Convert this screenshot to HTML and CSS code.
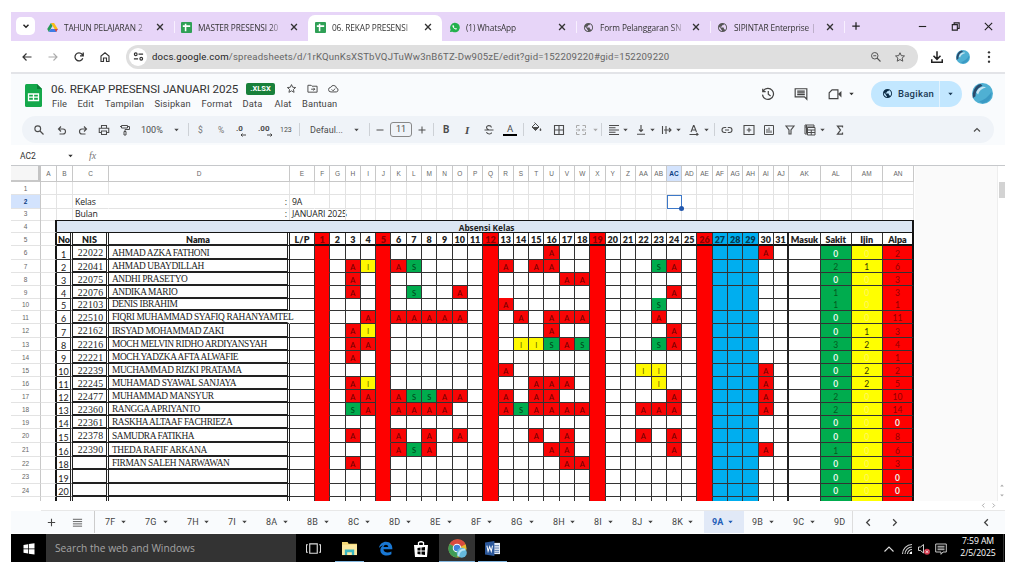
FILE: index.html
```html
<!DOCTYPE html>
<html lang="id">
<head>
<meta charset="utf-8">
<title>06. REKAP PRESENSI JANUARI 2025</title>
<link rel="stylesheet" href="styles.css">
</head>
<body>
<svg class="defs" xmlns="http://www.w3.org/2000/svg">
  <symbol id="x" viewBox="0 0 12 12"><path d="M2.500 2.500l7 7M9.500 2.500l-7 7" fill="none" stroke="currentColor" stroke-width="1.600"/></symbol>
  <symbol id="globe" viewBox="0 0 24 24"><path d="M12 2a10 10 0 1 0 0 20 10 10 0 0 0 0-20zm-1 17.900A8 8 0 0 1 4.200 10.200L9 15v1c0 1.100.9 2 2 2v1.900zm6.900-2.500A2 2 0 0 0 16 16h-1v-3a1 1 0 0 0-1-1H8v-2h2a1 1 0 0 0 1-1V7h2a2 2 0 0 0 2-2v-.4a8 8 0 0 1 2.900 12.800z" fill="currentColor"/></symbol>
  <symbol id="sheet" viewBox="0 0 12 12"><rect width="12" height="12" rx="1" fill="#2fa056"/><path d="M2 4.500h8M5 2v8" stroke="#fff" stroke-width="1.700"/></symbol>
  <symbol id="star" viewBox="0 0 24 24"><path d="M12 3.500l2.600 5.800 6.400.6-4.800 4.200 1.400 6.300-5.600-3.300-5.600 3.300 1.400-6.300L3 9.900l6.400-.6z" fill="none" stroke="currentColor" stroke-width="2"/></symbol>
  <symbol id="search" viewBox="0 0 24 24"><circle cx="9.500" cy="9.500" r="5.800" fill="none" stroke="currentColor" stroke-width="2.200"/><path d="M14 14l7 7" stroke="currentColor" stroke-width="2.600"/></symbol>
  <symbol id="zoomout" viewBox="0 0 24 24"><circle cx="9.500" cy="9.500" r="6.500" fill="none" stroke="currentColor" stroke-width="2"/><path d="M14 14l7 7M6.500 9.500h6" stroke="currentColor" stroke-width="2.200"/></symbol>
  <symbol id="caret" viewBox="0 0 6 4"><path d="M.3.500h5.400L3 3.500z" fill="currentColor"/></symbol>
  <symbol id="left" viewBox="0 0 12 12"><path d="M7.500 2.500L4 6l3.500 3.500" fill="none" stroke="currentColor" stroke-width="1.400"/></symbol>
  <symbol id="right" viewBox="0 0 12 12"><path d="M4.500 2.500L8 6 4.500 9.500" fill="none" stroke="currentColor" stroke-width="1.400"/></symbol>
  <symbol id="undo" viewBox="0 0 24 24"><path d="M7 20h7a5 5 0 0 0 0-10H5m5-5L5 10l5 5" fill="none" stroke="currentColor" stroke-width="2.300"/></symbol>
  <symbol id="avatar" viewBox="0 0 24 24"><circle cx="12" cy="12" r="12" fill="#4fb0d3"/><path d="M1 17C0 9 4 2 10 1l2 2c-5 2-8 6-8 12z" fill="#2a4a6b"/><path d="M5 11c1-5 7-8 11-6-5 1-8 4-9 8z" fill="#c9e6f2"/><path d="M8 21c5-1 11-5 14-11 2 7-4 13-10 13z" fill="#3b9ac4"/></symbol>
</svg>

<main class="desktop">
  <div class="tabstrip">
    <div class="tabsearch"><svg viewBox="0 0 12 12"><path d="M3 4.500l3 3 3-3" fill="none" stroke="#222" stroke-width="1.700"/></svg></div>
    <div class="tab"><svg class="fav" viewBox="0 0 24 24"><path d="M8.500 2h7l8 13h-7z" fill="#f8bc16"/><path d="M8.500 2L.5 15.500 4 22l8-13.500z" fill="#249a57"/><path d="M4 22l3.800-7h15.700L20 22z" fill="#3e7de6"/><path d="M20 22l3.500-7h-7z" fill="#e4483b"/></svg><span class="t">TAHUN PELAJARAN 2</span><svg class="close"><use href="#x"/></svg></div>
    <div class="tab split"><svg class="fav"><use href="#sheet"/></svg><span class="t">MASTER PRESENSI 20</span><svg class="close"><use href="#x"/></svg></div>
    <div class="tab active"><svg class="fav"><use href="#sheet"/></svg><span class="t">06. REKAP PRESENSI</span><svg class="close"><use href="#x"/></svg></div>
    <div class="tab"><svg class="fav" viewBox="0 0 24 24"><path d="M2 22l1.500-5.500A10.500 10.500 0 1 1 7.500 21z" fill="#23b14d"/><path d="M8 7c-2 3 3 9 8 9.500l1.500-2-2.500-1.500-1.500 1c-1.500-.7-2.500-1.800-3-3l1-1.200L10 7z" fill="#fff"/></svg><span class="t">(1) WhatsApp</span><svg class="close"><use href="#x"/></svg></div>
    <div class="tab split"><svg class="fav gray"><use href="#globe"/></svg><span class="t">Form Pelanggaran SN</span><svg class="close"><use href="#x"/></svg></div>
    <div class="tab split"><svg class="fav gray"><use href="#globe"/></svg><span class="t">SIPINTAR Enterprise |</span><svg class="close"><use href="#x"/></svg></div>
    <div class="newtab split"><svg viewBox="0 0 12 12"><path d="M6 1.500v9M1.500 6h9" stroke="#222" stroke-width="1.500"/></svg></div>
    <div class="winbtns">
      <svg viewBox="0 0 12 12"><path d="M2 6h8" stroke="#222" stroke-width="1.200"/></svg>
      <svg viewBox="0 0 12 12"><path d="M2.500 4h5.500v6H2.500zM4.500 4V2h5.500v6H8" fill="none" stroke="#222" stroke-width="1.200"/></svg>
      <svg viewBox="0 0 12 12"><path d="M2 2l8 8M10 2l-8 8" stroke="#222" stroke-width="1.200"/></svg>
    </div>
  </div>

  <div class="address">
    <div class="nav">
      <svg viewBox="0 0 24 24"><path d="M21 12H4m7-7l-7 7 7 7" fill="none" stroke="#333" stroke-width="2.400"/></svg>
      <svg viewBox="0 0 24 24"><path d="M3 12h17m-7-7l7 7-7 7" fill="none" stroke="#aaa" stroke-width="2.200"/></svg>
      <svg viewBox="0 0 24 24"><path d="M19.500 14.500A8 8 0 1 1 18 6.500l2 2.500M20.500 3v6.500H14" fill="none" stroke="#333" stroke-width="2.500"/></svg>
      <svg viewBox="0 0 24 24"><path d="M4 21V10l8-6.500 8 6.500v11h-5v-7H9v7z" fill="none" stroke="#333" stroke-width="2.300"/></svg>
    </div>
    <div class="omnibox">
      <span class="site"><svg viewBox="0 0 24 24"><path d="M12 7h10M2 17h9" stroke="#333" stroke-width="2.600"/><circle cx="6" cy="7" r="3" fill="none" stroke="#333" stroke-width="2.400"/><circle cx="18" cy="17" r="3" fill="none" stroke="#333" stroke-width="2.400"/></svg></span>
      <span class="url"><b>docs.google.com</b>/spreadsheets/d/1rKQunKsXSTbVQJTuWw3nB6TZ-Dw905zE/edit?gid=152209220#gid=152209220</span>
      <svg class="ob"><use href="#zoomout"/></svg>
      <svg class="ob"><use href="#star"/></svg>
    </div>
    <div class="chromeright">
      <svg viewBox="0 0 24 24"><path d="M12 2v13m-6-5l6 6 6-6M3 16v5h18v-5" fill="none" stroke="#222" stroke-width="2.600"/></svg>
      <svg class="av"><use href="#avatar"/></svg>
      <svg viewBox="0 0 24 24"><g fill="#333"><circle cx="12" cy="4" r="2"/><circle cx="12" cy="12" r="2"/><circle cx="12" cy="20" r="2"/></g></svg>
    </div>
  </div>

  <header class="dochead">
    <svg class="logo" viewBox="0 0 17 23"><path d="M1.500 0H12l5 5v16.500q0 1.500-1.500 1.500h-14Q0 23 0 21.500v-20Q0 0 1.500 0z" fill="#14a84b"/><path d="M12 0l5 5h-5z" fill="#0b7d37"/><path d="M3.500 10h10v6.500h-10zM3.500 13.200h10M8.500 10v6.500" fill="none" stroke="#fff" stroke-width="1.300"/></svg>
    <div class="doc">
      <div class="titleline"><h1>06. REKAP PRESENSI JANUARI 2025</h1><span class="badge">.XLSX</span>
        <svg><use href="#star"/></svg>
        <svg viewBox="0 0 24 24"><path d="M2 5h7l2 2h11v13H2zM9 13.500h8m-3-3l3 3-3 3" fill="none" stroke="#444" stroke-width="2"/></svg>
        <svg viewBox="0 0 24 24"><path d="M6.500 19.500a5 5 0 0 1-.5-10 6.500 6.500 0 0 1 12.500 1.500 4.300 4.300 0 0 1-.5 8.500zM8 14l3 3 5-5" fill="none" stroke="#444" stroke-width="2"/></svg>
      </div>
      <nav class="menu"><span>File</span><span>Edit</span><span>Tampilan</span><span>Sisipkan</span><span>Format</span><span>Data</span><span>Alat</span><span>Bantuan</span></nav>
    </div>
    <div class="actions">
      <svg viewBox="0 0 24 24"><path d="M4 6.500A9.500 9.500 0 1 1 2.500 13M3 3v5h5M12.500 7v5.500l4 3" fill="none" stroke="#444" stroke-width="2.100"/></svg>
      <svg viewBox="0 0 24 24"><path d="M2 3h20v18l-4-4H2zM5.500 7h13M5.500 10h13M5.500 13h13" fill="none" stroke="#444" stroke-width="2"/></svg>
      <svg viewBox="0 0 24 24"><path d="M7 5h10v15H2V10z" fill="none" stroke="#444" stroke-width="2"/><path d="M17 12l6-5v11z" fill="#444"/></svg>
      <svg class="c"><use href="#caret"/></svg>
      <div class="share"><svg class="g"><use href="#globe"/></svg><span>Bagikan</span><i></i><svg class="c"><use href="#caret"/></svg></div>
      <svg class="me"><use href="#avatar"/></svg>
    </div>
  </header>

  <div class="toolwrap"><div class="toolbar">
    <svg class="ic"><use href="#search"/></svg>
    <svg class="ic"><use href="#undo"/></svg>
    <svg class="ic flip"><use href="#undo"/></svg>
    <svg class="ic" viewBox="0 0 24 24"><path d="M7 8V3h10v5M6 17H2.500V8.500h19V17H18M7 14h10v7H7z" fill="none" stroke="currentColor" stroke-width="2.100"/></svg>
    <svg class="ic" viewBox="0 0 24 24"><path d="M5 3h12v5H5zM17 5h4v6h-9v4M10 15h4v7h-4zM5 5H2" fill="none" stroke="currentColor" stroke-width="2"/></svg>
    <span>100%</span><svg class="c"><use href="#caret"/></svg><i></i>
    <span class="s">$</span><span class="s">%</span>
    <span class="dec">.0<svg viewBox="0 0 6 4"><path d="M6 2H1M2.500.5L1 2l1.500 1.500" fill="none" stroke="#444"/></svg></span><span class="dec">.00<svg viewBox="0 0 6 4"><path d="M0 2h5M3.500.5L5 2 3.500 3.500" fill="none" stroke="#444"/></svg></span><span class="xs">123</span><i></i>
    <span>Defaul...</span><svg class="c"><use href="#caret"/></svg><i></i>
    <svg class="sm" viewBox="0 0 8 8"><path d="M.5 4h7" stroke="currentColor"/></svg><span class="size">11</span><svg class="sm" viewBox="0 0 8 8"><path d="M.5 4h7M4 .5v7" stroke="currentColor"/></svg><i></i>
    <b>B</b><em>I</em>
    <svg class="ic" viewBox="0 0 24 24"><path d="M17 7c-1-5-10-5-10 0 0 3 3 4 5 5M7 16c1 5 10 5 10 1M3 12h18" fill="none" stroke="currentColor" stroke-width="2.200"/></svg>
    <span class="tc">A</span><i></i>
    <svg class="ic lift" viewBox="0 0 24 24"><path d="M9 1l9 9-7 7-7-7 7-7" fill="none" stroke="currentColor" stroke-width="2"/><path d="M5 10h13l-7 7zM21 12c3 4 1.500 6 0 6s-3-2 0-6z" fill="currentColor"/></svg>
    <svg class="ic" viewBox="0 0 24 24"><path d="M3 3h18v18H3zM3 12h18M12 3v18" fill="none" stroke="currentColor" stroke-width="2.200"/></svg>
    <svg class="ic faint" viewBox="0 0 24 24"><path d="M9 3H3v5M3 16v5h6M15 3h6v5M21 16v5h-6M2 12h7M15 12h7M7 9.500L9.500 12 7 14.500M17 9.500L14.500 12l2.500 2.500" fill="none" stroke="currentColor" stroke-width="2"/></svg>
    <svg class="c faint"><use href="#caret"/></svg><i></i>
    <svg class="ic" viewBox="0 0 24 24"><path d="M2 3h20M2 7.500h13M2 12h20M2 16.500h13M2 21h20" stroke="currentColor" stroke-width="2.200"/></svg><svg class="c"><use href="#caret"/></svg>
    <svg class="ic" viewBox="0 0 24 24"><path d="M12 2v13m-4-4l4 4 4-4M4 20.500h16" fill="none" stroke="currentColor" stroke-width="2.300"/></svg><svg class="c"><use href="#caret"/></svg>
    <svg class="ic" viewBox="0 0 24 24"><path d="M3 4v16M10 4v16M6 12h14m-4-4l4 4-4 4" fill="none" stroke="currentColor" stroke-width="2.200"/></svg><svg class="c"><use href="#caret"/></svg>
    <svg class="ic" viewBox="0 0 24 24"><path d="M6 16l5-13h1l5 13M8 12h7M3 21h17m-3-3l3 3-3 2" fill="none" stroke="currentColor" stroke-width="2.200"/></svg><svg class="c"><use href="#caret"/></svg><i></i>
    <svg class="ic" viewBox="0 0 24 24"><path d="M10.500 7H7a5 5 0 0 0 0 10h3.500M13.500 7H17a5 5 0 0 1 0 10h-3.500M8 12h8" fill="none" stroke="currentColor" stroke-width="2.200"/></svg>
    <svg class="ic" viewBox="0 0 24 24"><path d="M2 3h20v18H2zM12 7.500v9M7.500 12h9" fill="none" stroke="currentColor" stroke-width="2.200"/></svg>
    <svg class="ic" viewBox="0 0 24 24"><path d="M3 3h18v18H3zM8 10v8M12 7v11M16 13v5" fill="none" stroke="currentColor" stroke-width="2"/></svg>
    <svg class="ic" viewBox="0 0 24 24"><path d="M4 4h16l-6 8v8h-4v-8z" fill="none" stroke="currentColor" stroke-width="2.300"/></svg>
    <svg class="ic" viewBox="0 0 24 24"><path d="M7 20H2V2h18v4M7 7h15v15H7zM7 12h15M7 17h15M14.500 12v10M5 2v17M2 6h18" fill="none" stroke="currentColor" stroke-width="2"/></svg><svg class="c"><use href="#caret"/></svg>
    <svg class="ic" viewBox="0 0 24 24"><path d="M17 7V4H7l6 8-6 8h10v-3" fill="none" stroke="currentColor" stroke-width="2.500"/></svg>
    <svg class="ic" viewBox="0 0 24 24"><path d="M6 15l6-6 6 6" fill="none" stroke="currentColor" stroke-width="2.300"/></svg>
  </div></div>

  <div class="formula"><span class="name">AC2</span><svg class="c"><use href="#caret"/></svg><em>fx</em></div>

  <section class="viewport"><div class="grid" id="grid"></div><div class="vscroll"><b></b><div class="steps"><svg><use href="#caret"/></svg><svg><use href="#caret"/></svg></div></div></section>
  <div class="hscroll"><svg><use href="#left"/></svg><svg><use href="#right"/></svg></div>

  <footer class="sheets">
    <svg class="ic" viewBox="0 0 12 12"><path d="M6 2v8M2 6h8" stroke="#444" stroke-width="1.200"/></svg>
    <svg class="ic" viewBox="0 0 12 12"><path d="M1 2.500h10M1 5h10M1 7.500h10M1 10h10" stroke="#555"/></svg>
    <div class="sheettabs" id="tabs"></div>
    <div class="pager"><svg class="ic"><use href="#left"/></svg><svg class="ic"><use href="#right"/></svg></div>
    <svg class="ic"><use href="#left"/></svg>
  </footer>

  <div class="taskbar">
    <div class="start"><svg viewBox="0 0 24 24"><path d="M1 4l9-1.500V11H1zM11.500 2.200L23 .5V11H11.500zM1 12.500h9V21l-9-1.500zM11.500 12.500H23V23l-11.500-1.700z" fill="#fff"/></svg></div>
    <div class="find">Search the web and Windows</div>
    <div class="apps">
      <div class="app"><svg viewBox="0 0 16 16"><path d="M4 3h8v10H4zM2 4H.5v8H2M14 4h1.500v8H14" fill="none" stroke="#ddd" stroke-width="1.200"/></svg></div>
      <div class="app run"><svg viewBox="0 0 16 16"><path d="M0 1h6l1 2h9v12H0z" fill="#f3d775"/><path d="M0 4h16v11H0z" fill="#fbe8a0"/><path d="M3 15V9h10v6h-2.500v-3h-5v3z" fill="#3ab6c0"/></svg></div>
      <div class="app"><svg viewBox="0 0 16 16"><path d="M1 7.500C2 3 5 .8 8.500.8c4.500 0 7 3.200 6.800 8H5.800c.4 4 5.200 4.300 8.500 2.400v3C9 17 2.500 15 2.500 9.500c0-2.300 1.500-4 3.200-4.800C3.500 5 2 6 1 7.500zM5.800 6.500h5.200C10.800 3 6.200 3 5.800 6.500z" fill="#1978d4" fill-rule="evenodd"/></svg></div>
      <div class="app"><svg class="store" viewBox="0 0 16 16"><path d="M5.500 4V1.500q2.500-1.500 5 0V4" fill="none" stroke="#fff" stroke-width="1.300"/><path d="M1 4h14l-1 12H2z" fill="#fff"/><path d="M4.500 7l3-.4v3h-3zM8.500 6.500l3.500-.5v3.600H8.500zM4.500 10.500h3v3l-3-.4zM8.500 10.500H12V14l-3.500-.4z" fill="#000"/></svg></div>
      <div class="app run on"><svg viewBox="0 0 20 20"><circle cx="10" cy="10" r="9.500" fill="#e5ba30"/><path d="M10 10L1.700 5.200A9.500 9.500 0 0 1 18.500 5.500z" fill="#d84b3e"/><path d="M10 10L1.700 5.200A9.500 9.500 0 0 0 10 19.500z" fill="#3f9b57"/><circle cx="9.500" cy="9.500" r="4.500" fill="#fff"/><circle cx="9.500" cy="9.500" r="3.500" fill="#4181d9"/><circle cx="14.500" cy="14.500" r="5.300" fill="#65b8dc"/><path d="M11 18c0-5 3-7 7-7" stroke="#b5e4f5" stroke-width="2" fill="none"/></svg></div>
      <div class="app run"><svg viewBox="0 0 16 16"><path d="M8 2h8v12H8z" fill="#e6ecf5"/><path d="M10 5h5M10 7.500h5M10 10h5M10 12h5" stroke="#2b579a" stroke-width=".8"/><path d="M0 1.500L10 0v16L0 14.500z" fill="#2b579a"/><path d="M2 5l1.300 6L5 6l1.700 5L8 5" fill="none" stroke="#fff" stroke-width="1.100"/></svg></div>
    </div>
    <div class="tray">
      <svg viewBox="0 0 12 12"><path d="M1.500 8.500L6 4l4.500 4.500" fill="none" stroke="#ddd" stroke-width="1.100"/></svg>
      <svg viewBox="0 0 12 12"><path d="M1.500 11A9.500 9.500 0 0 1 11 1.500M4 11a7 7 0 0 1 7-7M6.500 11A4.500 4.500 0 0 1 11 6.500" fill="none" stroke="#ccc" stroke-width="1.100"/><path d="M8.500 11A2.500 2.500 0 0 1 11 8.500V11z" fill="#fff"/></svg>
      <svg viewBox="0 0 12 12"><path d="M.5 4h2L5.500 1.500v8.500L2.500 7.500h-2z" fill="none" stroke="#ccc"/><circle cx="9" cy="8.700" r="3" fill="#d23a4e"/><path d="M7.800 7.500l2.400 2.400M10.200 7.500L7.800 9.900" stroke="#fff" stroke-width=".8"/></svg>
      <svg viewBox="0 0 12 12"><path d="M.7 1h10.600v8H8l-2 2.300V9H.7zM2.500 3.300h7M2.500 5h7M2.500 6.700h7" fill="none" stroke="#ddd" stroke-width=".9"/></svg>
    </div>
    <div class="clock"><span>7:59 AM</span><span>2/5/2025</span></div>
  </div>
</main>
<script src="sheet.js"></script>
</body>
</html>
```
FILE: styles.css
```css
* { box-sizing: border-box; }
body { margin: 0; background: #fff; font-family: Roboto, "Liberation Sans", sans-serif; color: #333; }
svg { display: block; flex: none; }
.defs { position: absolute; width: 0; height: 0; }
.desktop { width: 994px; height: 550px; margin: 12px 0 0 11px; display: flex; flex-direction: column; overflow: hidden; }
.desktop > * { flex: none; }

.tabstrip { height: 29px; background: #e7d5f8; display: flex; align-items: stretch; font: 8.300px "Open Sans", sans-serif; }
.tabsearch { width: 19px; height: 18px; margin: 5px 5px 0; background: #fff; border-radius: 5px; display: grid; place-items: center; }
.tabsearch svg { width: 10px; height: 10px; }
.tab { width: 134px; display: flex; align-items: center; padding: 0 8px 2px 7px; margin-top: 3px; border-radius: 7px 7px 0 0; }
.tab .fav { width: 11px; height: 11px; margin-right: 6px; }
.tab .fav.gray { color: #555; }
.tab .t { width: 85px; white-space: nowrap; letter-spacing: -.12px; -webkit-mask-image: linear-gradient(90deg, #000 84%, transparent); mask-image: linear-gradient(90deg, #000 84%, transparent); }
.tab .close { width: 10px; height: 10px; margin-left: 6px; color: #333; }
.tab.active { background: #fff; }
.split { background: linear-gradient(#f8f0ff, #f8f0ff) 0 6px / 1px 12px no-repeat; }
.newtab { margin-top: 3px; width: 25px; padding: 6px 0 0 7px; }
.newtab svg { width: 10px; height: 10px; }
.winbtns { margin-left: auto; display: flex; gap: 22px; align-items: center; padding-right: 11px; }
.winbtns svg { width: 11px; height: 11px; }

.address { height: 33px; border-bottom: 2px solid #e3e4e8; display: flex; align-items: center; background: #fff; }
.nav { display: flex; gap: 14px; padding-left: 10px; width: 115px; }
.nav svg { width: 12px; height: 12px; }
.omnibox { width: 792px; height: 24px; border-radius: 12px; background: #dfdfdf; display: flex; align-items: center; }
.site { width: 18px; height: 18px; border-radius: 50%; background: #fff; margin-left: 3px; display: grid; place-items: center; }
.site svg { width: 11px; height: 11px; }
.url { font-size: 9.600px; margin-left: 5px; color: #666; letter-spacing: .19px; flex: 1; white-space: nowrap; }
.url b { font-weight: 400; color: #222; }
.ob { width: 12px; height: 12px; margin-right: 12px; color: #555; }
.chromeright { display: flex; align-items: center; gap: 12px; padding-left: 12px; }
.chromeright svg { width: 14px; height: 14px; }

.dochead { height: 42px; background: #f9fbfd; display: flex; }
.logo { width: 17px; height: 23px; margin: 10px 9px 0 14px; }
.doc { width: 400px; }
.titleline { display: flex; align-items: center; height: 17px; margin-top: 6px; }
.titleline h1 { margin: 0; font-weight: 400; font-size: 11.600px; letter-spacing: -.08px; width: 194px; white-space: nowrap; color: #333; }
.titleline .badge { width: 29px; height: 12px; border-radius: 2px; background: #18803a; color: #fff; font: bold 7.500px/12px Roboto, sans-serif; text-align: center; margin: 0 11px 0 1px; }
.titleline svg { width: 11px; height: 11px; margin-right: 10px; color: #444; }
.menu { display: grid; grid-template-columns: 25.500px 27.500px 49.500px 47px 41px 32px 27.500px 50px; font-size: 9.300px; line-height: 13px; letter-spacing: .15px; padding-left: 1px; color: #444; }
.actions { display: flex; align-items: center; margin-left: auto; padding: 0 12px 3px 0; }
.actions > svg { width: 14px; height: 14px; margin-right: 19.500px; }
.actions > svg.c { width: 5px; height: 4px; margin: 0 17px 0 -12px; }
.share { width: 91px; height: 26px; border-radius: 13px; background: #c2e7ff; display: flex; align-items: center; font-size: 9.500px; font-weight: 500; letter-spacing: .25px; color: #1b3a55; margin-right: 10px; }
.share .g { width: 11px; height: 11px; margin: 0 5px 0 11px; color: #0b2b45; }
.share i { width: 1px; height: 26px; background: #e2f3ff; margin: 0 8px 0 5px; }
.share .c { width: 5px; height: 4px; }
.actions > svg.me { width: 21px; height: 21px; margin: 0; }

.toolwrap { height: 29px; background: #f9fbfd; padding: 0 11px; }
.toolbar { height: 27px; border-radius: 14px; background: #eff3f8; padding-left: 11px; display: grid; align-items: center; font-size: 9px; color: #4c4c4c; white-space: nowrap;
  grid-template-columns: 23px 21px 21px 21px 22px 33px 14px 10px 20px 18px 22px 22px 19px 11px 44px 15px 7px 14px 28px 15px 10px 21px 19px 20px 20px 7px 23px 22px 18px 8px 7px 15px 12px 15px 11px 15px 12px 16px 10px 7px 22px 20px 21px 20px 16px 14px 137px 12px; }
.toolbar .ic { width: 12px; height: 12px; }
.toolbar .lift { margin-bottom: 3px; }
.toolbar .c, .formula .c { width: 5px; height: 4px; }
.toolbar .flip { transform: scaleX(-1); }
.toolbar i { width: 1px; height: 13px; background: #cdd1d6; }
.toolbar .sm { width: 8px; height: 8px; }
.toolbar .s { font-size: 8.500px; color: #777; }
.toolbar .xs { font-size: 7px; }
.toolbar .dec { font-weight: 700; font-size: 8px; display: flex; align-items: flex-end; height: 13px; line-height: 14px; }
.dec svg { width: 6px; height: 4px; margin: 0 0 -1px -3px; }
.toolbar .size { width: 22px; height: 15px; border: 1px solid #888; border-radius: 3px; text-align: center; line-height: 13px; }
.toolbar b { font-size: 10px; }
.toolbar em { font: italic bold 11px "Liberation Serif", serif; padding-left: 1px; }
.toolbar .tc { width: 14px; height: 13px; border-bottom: 2px solid #000; text-align: center; line-height: 11px; font-size: 9.500px; }
.toolbar .faint { color: #aaa; }

.formula { height: 21px; border-bottom: 1px solid #c6c8cb; display: flex; align-items: center; background: #fff; font-size: 8.500px; padding: 1px 0 0 9px; }
.formula .name { width: 48px; }
.formula em { font: italic 10px "Liberation Serif", serif; color: #777; margin-left: 16px; }

.viewport { height: 335px; display: flex; background: #fafafa; overflow: hidden; }
.grid { width: 904px; background: #fff; align-self: flex-start; }
.row { display: grid; grid-template-columns: 30px 16px 16px 36px 181px 25px repeat(31, 15.306px) 31.500px 31px 31px 31.500px; }
.row > * { border-right: 1px solid #e3e3e3; border-bottom: 1px solid #e3e3e3; overflow: hidden; white-space: nowrap; text-align: center; min-width: 0; display: flex; align-items: center; justify-content: center; }
.row .open { overflow: visible; }
.colhead > * { border-color: #c8c8c8; font: 6.500px "Liberation Sans", sans-serif; color: #666; }
.row .corner { background: #f6f6f6; border-right: 3px solid #c4c4c4; border-bottom-width: 2px; }
.row .rownum { font: 6.500px "Liberation Sans", sans-serif; color: #666; border-right-color: #c8c8c8; padding-left: 0; }
.row .hot { background: #d3e3fd; color: #0b3b80; font-weight: 700; }
.info > * { font: 8.700px "Open Sans", sans-serif; color: #222; }
.info .txt { justify-content: flex-start; padding: 1px 0 0 2px; letter-spacing: -.1px; border-right-color: transparent; }
.info .colon { justify-content: flex-end; padding: 1px 2px 0 0; }
.info .clear { border-right-color: transparent; }
.row .active { position: relative; overflow: visible; outline: 1px solid #3c78c8; outline-offset: -1px; }
.row .active::after { content: ""; position: absolute; right: -3px; bottom: -3px; width: 5px; height: 5px; border-radius: 50%; background: #2257ad; }
.row .title { grid-column: 3 / -1; background: #dce6f3; border: solid #151515; border-width: 1px 2px 1px 0; font: bold 8.300px "Open Sans", sans-serif; letter-spacing: -.05px; padding: 1px 0 0 4px; color: #222; }
.row .edge { border-right: 2px solid #151515; }
.box > .k { border-color: #333; font: 9px Lato, sans-serif; color: #222; }
.heads > .k { font: 800 9px Lato, sans-serif; border-bottom: 2px solid #111; padding-top: 1px; }
.box > .num { padding-top: 3px; border-right: 3px double #222; }
.heads > .num { padding: 1px 0 0 1px; }
.box > .nis { border-right: 3px double #222; border-bottom: 2px solid #222; }
.body > .nis { font: 9.800px "Liberation Serif", serif; letter-spacing: .25px; padding-top: 1px; padding-left: 2px; }
.box > .nama { border-right: 3px double #222; border-bottom: 2px solid #222; }
.body > .nama { font: 9.400px "Liberation Serif", serif; justify-content: flex-start; padding: 1px 0 0 3px; letter-spacing: -.4px; }
.body > .nama.long { border-right-color: transparent; }
.box > .red { background: #fe0000; color: #8d0000; }
.body > .red { border-bottom-color: #fe0000; }
.box > .blue { background: #00aeef; color: #053a52; }
.body > .A, .body > .S, .body > .I { font-size: 7.500px; padding-top: 2px; }
.box > .A { background: #f80505; color: #6b0000; }
.box > .S { background: #00ac4e; color: #003d18; }
.box > .I { background: #fff900; color: #5e5a00; }
.box > .sum { padding-top: 2px; font-size: 8.500px; }
.box > .last { border-right: 2px solid #111; }
.box > .j { border-right: 2px solid #222; }
.body > .sakit { background: #00ac4e; color: #06591f; }
.body > .ijin { background: #ff0; color: #333300; }
.body > .alpa { background: #fe0000; color: #8f0000; }
.box > .zero { color: #e9f8ec; font-weight: 700; }
.body > .ijin.zero { color: #fff56a; font-weight: 400; }
.vscroll { margin-left: auto; width: 8px; background: #fff; border-left: 1px solid #eee; padding: 16px 1px 4px; display: flex; flex-direction: column; justify-content: space-between; }
.vscroll b { width: 6px; height: 16px; background: #d3d3d3; }
.steps { display: grid; gap: 7px; padding-left: 1px; color: #aaa; }
.steps svg { width: 4px; height: 3px; }
.steps svg:first-child { transform: scaleY(-1); }
.hscroll { height: 10px; margin-left: 30px; background: #fff; border-bottom: 1px solid #e8e8e8; display: flex; justify-content: flex-end; align-items: center; gap: 3px; color: #999; padding-right: 8px; }
.hscroll svg { width: 7px; height: 7px; }

.sheets { height: 22px; background: #f9fbfd; display: flex; align-items: center; padding-left: 35px; }
.sheets .ic { width: 11px; height: 11px; color: #444; margin-right: 15px; }
.sheets .ic:nth-child(2) { margin-right: 11px; }
.sheettabs { display: grid; grid-template-columns: 40px 42px 41px 38px 41px 41px 41px 41px 41px 40px 42px 41px 38px 40px 40px 40px 41px 41px 27px; height: 22px; border-left: 1px solid #ccc; padding-left: 2px; font-size: 9px; letter-spacing: .2px; color: #444; }
.sheettabs > div { display: flex; align-items: center; justify-content: space-between; padding: 0 14px 0 8px; }
.sheettabs > div:last-child { border-right: 1px solid #ddd; padding-right: 0; }
.sheettabs > .on { background: #e1e9f7; color: #1f5db8; font-weight: 700; padding-right: 14px; }
.sheettabs svg { width: 5px; height: 4px; margin-right: -3px; }
.pager { display: flex; margin-left: 10px; }
.sheets > .ic:last-child { margin: 0 13px 0 auto; }

.taskbar { height: 29px; margin-top: 1px; background: #000; display: flex; color: #fff; font-family: "Open Sans", sans-serif; }
.start { width: 35px; display: grid; place-items: center; }
.start svg { width: 12px; height: 12px; }
.find { width: 250px; background: #333; color: #a5a5a5; font-size: 10.200px; line-height: 29px; padding-left: 9px; white-space: nowrap; }
.apps { display: flex; }
.app { width: 35.800px; display: grid; place-items: center; }
.app svg { width: 15px; height: 15px; }
.app .store { width: 16px; height: 18px; }
.app.run { background: linear-gradient(#83b7e0, #83b7e0) center bottom / 29px 2px no-repeat; }
.app.on { background-color: #333; background-size: 100% 2px; }
.app.on svg { width: 19px; height: 19px; }
.tray { display: flex; align-items: center; gap: 5px; margin-left: auto; }
.tray svg { width: 12px; height: 12px; }
.tray svg:first-child { margin-right: 1px; }
.clock { width: 56px; margin-left: 1px; padding: 1px 0 0 5px; font-size: 8.700px; line-height: 12px; display: flex; flex-direction: column; align-items: center; white-space: nowrap; letter-spacing: -.1px; border-right: 1px solid #333; margin-right: 1px; }
```
FILE: sheet.js
```js
const students = [
  [1, "22022", "AHMAD AZKA FATHONI", "16A 30A", 0, 0, 2],
  [2, "22041", "AHMAD UBAYDILLAH", "3A 4I 6A 7S 13A 15A 16A 23S 24A", 2, 1, 6],
  [3, "22075", "ANDHI PRASETYO", "3A 17A 18A", 0, 0, 3],
  [4, "22076", "ANDIKA MARIO", "3A 7S 10A 24A", 1, 0, 3],
  [5, "22103", "DENIS IBRAHIM", "13A 23S", 1, 0, 1],
  [6, "22510", "FIQRI MUHAMMAD SYAFIQ RAHANYAMTEL", "4A 6A 7A 8A 9A 10A 14A 16A 17A 18A 23A", 0, 0, 11],
  [7, "22162", "IRSYAD MOHAMMAD ZAKI", "3A 4I 16A 24A", 0, 1, 3],
  [8, "22216", "MOCH MELVIN RIDHO ARDIYANSYAH", "3A 4A 14I 15I 16S 17A 18S 23S 24A", 3, 2, 4],
  [9, "22221", "MOCH.YADZKA AFTA ALWAFIE", "3A", 0, 0, 1],
  [10, "22239", "MUCHAMMAD RIZKI PRATAMA", "13A 22I 23I 30A", 0, 2, 2],
  [11, "22245", "MUHAMAD SYAWAL SANJAYA", "3A 4I 15A 16A 17A 23I 30A", 0, 2, 5],
  [12, "22477", "MUHAMMAD MANSYUR", "3A 4A 6A 7S 8S 9A 10A 13A 15A 16A 24A 30A", 2, 0, 10],
  [13, "22360", "RANGGA APRIYANTO", "3S 4A 6A 7A 8A 9A 13A 14S 15A 16A 17A 18A 22A 23A 24A 30A", 2, 0, 14],
  [14, "22361", "RASKHA ALTAAF FACHRIEZA", "", 0, 0, 0],
  [15, "22378", "SAMUDRA FATIKHA", "3A 6A 8A 10A 15A 17A 22A 24A", 0, 0, 8],
  [16, "22390", "THEDA RAFIF ARKANA", "6A 7S 8A 16A 17A 24A 30A", 1, 0, 6],
  [18, "", "FIRMAN SALEH NARWAWAN", "3A 17A 18A", 0, 0, 3],
  [19, "", "", "", 0, 0, 0],
  [20, "", "", "", 0, 0, 0],
  ["", "", "", "", "", "", ""]
];
const heights = [16, 13, 12, 13, 13, 13, 14, 13, 13, 12, 13, 13, 14, 13, 13, 13, 13, 13, 13, 13, 14, 14, 13, 14, 13, 14];
const days = Array.from({ length: 31 }, (_, i) => i + 1);
const columns = "A B C D E F G H I J K L M N O P Q R S T U V W X Y Z AA AB AC AD AE AF AG AH AI AJ AK AL AM AN".split(" ");
const cell = (cls, text = "") => `<div class="${cls}">${text}</div>`;
const dayClass = d => [1, 5, 12, 19, 26].includes(d) ? " red" : d > 26 && d < 30 ? " blue" : "";
let line = 0;
const row = (cls, cells) => `<div class="row ${cls}" style="height:${heights[line++]}px">${cells}</div>`;
const info = (n, label, value) => row("info",
  cell("rownum" + (n === 2 ? " hot" : ""), n) + columns.map(c =>
    c === "C" && label ? cell("txt open", label) :
    c === "D" && label ? cell("colon", ":") :
    c === "E" && value ? cell("txt open", value) :
    c === "F" && n === 3 ? cell("clear") :
    cell(c === "AC" && n === 2 ? "active" : "")).join(""));

let html = row("colhead", cell("corner") + columns.map(c => cell(c === "AC" ? "hot" : "", c)).join(""));
html += info(1) + info(2, "Kelas", "9A") + info(3, "Bulan", "JANUARI 2025");
html += row("", cell("rownum", 4) + cell("edge") + cell("title", "Absensi Kelas"));
html += row("box heads", cell("rownum", 5) + cell("edge") + cell("k num", "No") + cell("k nis", "NIS") + cell("k nama", "Nama") + cell("k", "L/P") +
  days.map(d => cell("k" + dayClass(d) + (d === 31 ? " j" : ""), d)).join("") +
  cell("k", "Masuk") + cell("k", "Sakit") + cell("k", "Ijin") + cell("k last", "Alpa"));
students.forEach(([no, nis, name, marks, s, i, a], n) => {
  const m = Object.fromEntries(marks.split(" ").filter(Boolean).map(v => [parseInt(v), v.slice(-1)]));
  html += row("box body", cell("rownum", n < 19 ? n + 6 : "") + cell("edge") + cell("k num", no) + cell("k nis", nis) + cell("k nama open" + (name.length > 30 ? " long" : ""), name) + cell("k") +
    days.map(d => cell("k" + dayClass(d) + (m[d] ? " " + m[d] : "") + (d === 31 ? " j" : ""), m[d])).join("") + cell("k") +
    cell("k sum sakit" + (s ? "" : " zero"), s) + cell("k sum ijin" + (i ? "" : " zero"), i) + cell("k sum last alpa" + (a ? "" : " zero"), a));
});
document.getElementById("grid").innerHTML = html;

document.getElementById("tabs").innerHTML = "7F 7G 7H 7I 8A 8B 8C 8D 8E 8F 8G 8H 8I 8J 8K 9A 9B 9C 9D".split(" ")
  .map(t => cell(t === "9A" ? "on" : "", t + (t === "9D" ? "" : '<svg><use href="#caret"/></svg>'))).join("");
```
